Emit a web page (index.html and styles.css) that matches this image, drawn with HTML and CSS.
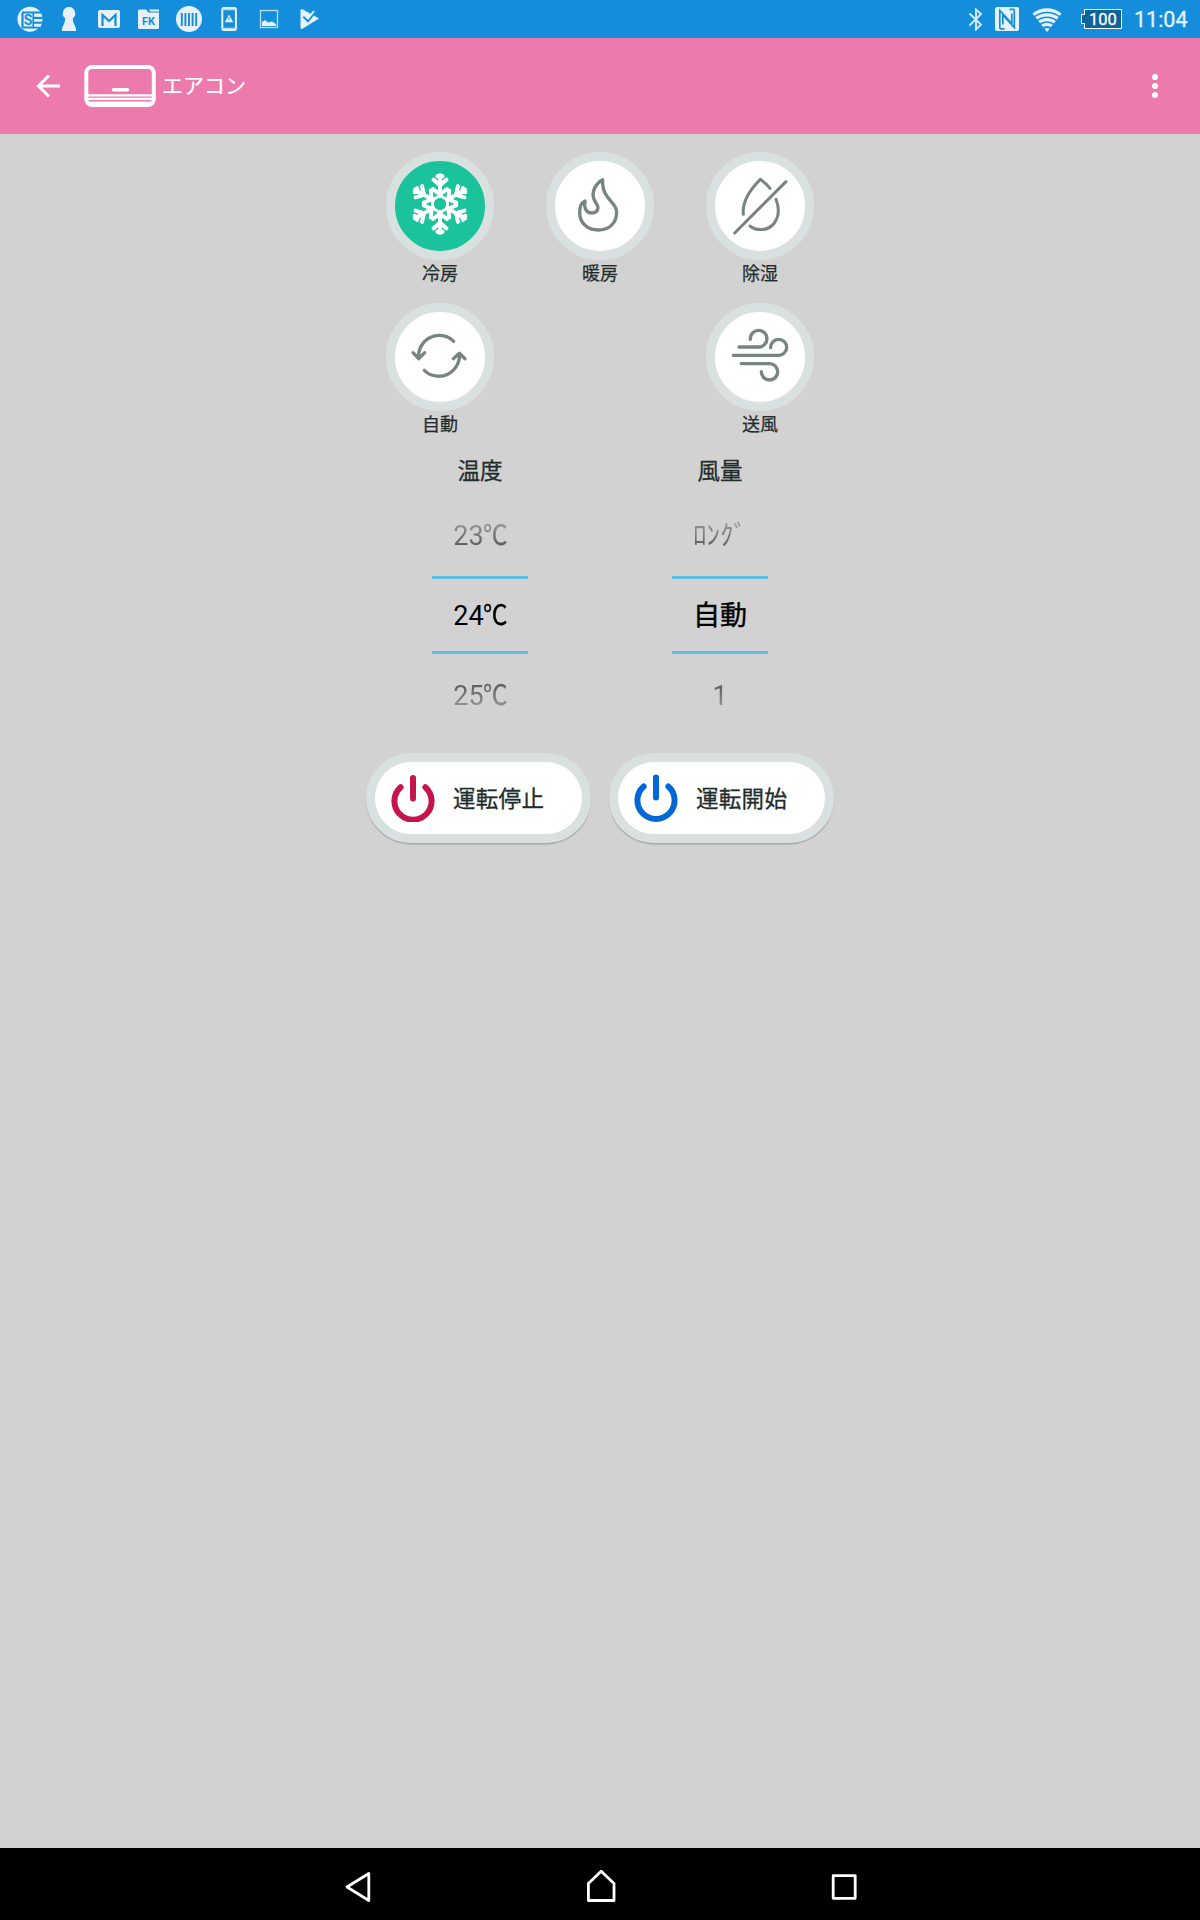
FILE: index.html
```html
<!DOCTYPE html>
<html lang="ja">
<head>
<meta charset="utf-8">
<title>エアコン</title>
<link rel="stylesheet" href="styles.css">
</head>
<body>
<div class="screen">
  <div class="status">
    <div class="notifications">
      <svg viewBox="9 0 40 38"><circle cx="30" cy="19.2" r="12.5"/><g class="cut"><path d="M22 12.5H43M33 17.8H43M33 22.6H43M22 27.5H40"/><path d="M22.5 13V27.5M33.5 13V27.5"/></g><path class="bar" d="M34 15.2H41.5M34 20.2H42M34 25.2H41"/><text class="badge-s" x="28" y="25.2">S</text></svg>
      <svg viewBox="49 0 40 38"><path d="M69 7a6.5 6.5 0 0 1 3.7 11.6L73.3 22 76 28.5V31H62V28.5L64.7 22 65.3 18.600A6.500 6.500 0 0 1 69 7Z"/></svg>
      <svg viewBox="89 0 40 38"><rect x="98" y="10" width="22" height="18" rx="2"/><path class="cut" d="M102.500 26V15L109 21 115.500 15V26"/></svg>
      <svg viewBox="129 0 40 38"><path d="M139.500 9.500H146L148.500 12.500H159V27.500Q159 29 157.500 29H139.500Q138 29 138 27.500V11Q138 9.500 139.500 9.500ZM149 9.500H159V11.500H150.500Z"/><text class="badge-fk" x="148.500" y="25">FK</text></svg>
      <svg viewBox="169 0 40 38"><circle cx="189" cy="19" r="13"/><path class="code" d="M181.800 13V26M185.400 13V26M189 13V26M192.600 13V26M196.200 13V26"/></svg>
      <svg viewBox="209 0 40 38"><rect class="line" x="222.300" y="8" width="13.600" height="22" rx="1.500"/><path class="thin" d="M222 9.500H236M222 28.500H236"/><path d="M229 14.500 233.200 22.200H224.800Z"/><path class="mark" d="M229 17V20"/></svg>
      <svg viewBox="249 0 40 38"><rect class="thin" x="260.500" y="10.500" width="17" height="17"/><path d="M262 26V22L265 20 268 22.500 272 21.500 276 24V26Z"/></svg>
      <svg viewBox="289 0 40 38"><path d="M302 9 319 18.500 302 29Q300.500 29 300.500 27.500V10.500Q300.500 9 302 9Z"/><path class="cut" d="M303.500 16.500 308 21 315.500 11.500"/><path class="tick" d="M304.500 15 308 18.500 314 11"/></svg>
    </div>
    <div class="system">
      <svg class="bluetooth" viewBox="968 8 15 23"><path class="bt" d="M969.500 13.500 981 24.500 976 29.500V9.500L981 14 969.500 25.500"/></svg>
      <svg class="nfc" viewBox="995 7 24 24"><rect x="995" y="7" width="24" height="24" rx="2"/><path class="nfc-cut" d="M1004.500 28.800H1000.500Q999.800 28.500 999.800 27V10.500L1011.800 23.500V13.500M1009.500 9.300H1013.500Q1014.300 9.500 1014.300 11V27.500L1002.800 15V24.500"/></svg>
      <svg class="wifi" viewBox="1032 8 30 25"><path d="M1047 32 1032.500 13.500C1041 6.600 1053 6.600 1061.500 13.500Z"/><path class="waves" d="M1033 17.500Q1047 7.500 1061 17.500M1036 21.500Q1047 13 1058 21.500M1039 25Q1047 19 1055 25M1042 29Q1047 25 1052 29"/></svg>
      <svg class="battery" viewBox="1081 9 41 20"><path class="cell" d="M1084.500 9.500H1121.500V28.500H1084.500V23.500H1081.500V14.500H1084.500Z"/><text class="level" x="1103" y="25">100</text></svg>
      <span class="clock">11:04</span>
    </div>
  </div>

  <div class="appbar">
    <svg class="back" viewBox="0 0 24 24"><path d="M24 12H2.500M13 1.500 2.500 12 13 22.500"/></svg>
    <svg class="aircon" viewBox="84 65 72 42"><rect class="case" x="86.300" y="67" width="67.500" height="38" rx="6"/><path class="slot" d="M113.500 89.700H127.500"/><path class="vent" d="M86 95.300H154"/><path class="vent" d="M87 98.800H153M88 102.500H152" /></svg>
    <h1>エアコン</h1>
    <svg class="more" viewBox="0 0 6 24"><circle cx="3" cy="3" r="3"/><circle cx="3" cy="12" r="3"/><circle cx="3" cy="21" r="3"/></svg>
  </div>

  <main>
    <div class="modes">
      <div class="mode selected">
        <span class="disc"><svg class="snow" viewBox="-54 -52 108 108"><defs><g id="arm"><path d="M0-8V-29M-6.500-24.500 0-18.500 6.500-24.500M-7-14.800 0-9.500 7-14.800M-2.500-27.800 0-26 2.500-27.800"/></g></defs><path class="hex" d="M0-8.500 7.400-4.250V4.250L0 8.500-7.400 4.250V-4.250Z"/><use href="#arm"/><use href="#arm" transform="rotate(60)"/><use href="#arm" transform="rotate(120)"/><use href="#arm" transform="rotate(180)"/><use href="#arm" transform="rotate(240)"/><use href="#arm" transform="rotate(300)"/></svg></span>
        <span>冷房</span>
      </div>
      <div class="mode">
        <span class="disc"><svg viewBox="0 0 324 324"><path d="M170 83C150 93 138 117 142 136C144 150 157 157 156 167C155 178 147 183 137 183C122 183 113 170 117 147C102 152 101 168 101 183C101 213 125 234 157 234C190 234 212 213 212 180C212 148 166 142 170 83Z"/></svg></span>
        <span>暖房</span>
      </div>
      <div class="mode">
        <span class="disc"><svg class="dry" viewBox="0 0 324 324"><path d="M112 187C108 150 135 110 163 82C173 89 184 98 192 109M210 142C222 173 218 195 205 213C188 237 152 238 132 222M86 243 240 89"/></svg></span>
        <span>除湿</span>
      </div>
      <div class="mode">
        <span class="disc"><svg viewBox="0 0 324 324"><path d="M203 115A62 62 0 0 0 98 166M81 149 98 167 116 149M115 202A62 62 0 0 0 220 151M202 167 220 151 237 167"/></svg></span>
        <span>自動</span>
      </div>
      <div class="mode fan">
        <span class="disc"><svg viewBox="0 0 324 324"><path d="M99 132H157A25 25 0 1 0 133 109M82 157H217A24 24 0 1 0 194 134M106 182H191A24.500 24.500 0 1 1 166 206"/></svg></span>
        <span>送風</span>
      </div>
    </div>

    <div class="pickers">
      <div class="picker">
        <h2>温度</h2>
        <div class="wheel"><span class="prev">23<i>℃</i></span><span class="current">24<i>℃</i></span><span class="next">25<i>℃</i></span></div>
      </div>
      <div class="picker">
        <h2>風量</h2>
        <div class="wheel"><span class="prev">ﾛﾝｸﾞ</span><span class="current word">自動</span><span class="next">1</span></div>
      </div>
    </div>

    <div class="power">
      <button class="stop"><svg viewBox="0 0 44 48"><path d="M9.600 13.200A18.600 18.600 0 1 0 34.400 13.200M22 4V24.500"/></svg><span>運転停止</span></button>
      <button class="start"><svg viewBox="0 0 44 48"><path d="M9.600 12.500A18.600 18.600 0 1 0 34.400 12.500M22 3.500V23.500"/></svg><span>運転開始</span></button>
    </div>
  </main>

  <nav>
    <svg viewBox="344 1868 30 40"><path d="M368.800 1877.500V1904.500L347 1891Z"/></svg>
    <svg viewBox="587 1868 30 40"><path d="M588.400 1904.500V1887.500L601.200 1875.200 614 1887.500V1904.500Z"/></svg>
    <svg viewBox="829 1868 30 40"><path d="M833.200 1879.700H855.200V1902.300H833.200Z"/></svg>
  </nav>
</div>
</body>
</html>
```
FILE: styles.css
```css
* { box-sizing: border-box; }
body { margin: 0; font-family: Roboto, "Noto Sans CJK JP", sans-serif; }
svg { display: block; flex: none; }
h1, h2 { margin: 0; font-weight: 400; }
.screen { width: 1200px; height: 1920px; display: flex; flex-direction: column; background: #d2d2d2; }

.status { height: 38px; background: #148eda; display: flex; justify-content: space-between; padding: 0 11px 0 9px; }
.status svg { fill: #e5f2fb; }
.notifications { display: flex; }
.notifications svg { width: 40px; height: 38px; }
.status .cut { fill: none; stroke: #148eda; stroke-width: 2.2; }
.status .bar { fill: none; stroke: #e5f2fb; stroke-width: 2.4; }
.status .line { fill: none; stroke: #e5f2fb; stroke-width: 2; }
.status .thin { fill: none; stroke: #b9dcf4; stroke-width: 1.3; }
.status .code { stroke: #148eda; stroke-width: 1.9; }
.status .mark { stroke: #148eda; stroke-width: 1; }
.status .tick { fill: none; stroke: #e5f2fb; stroke-width: 2; }
.badge-s { font-size: 14px; font-weight: 700; fill: #148eda; text-anchor: middle; }
.badge-fk { font-size: 11px; font-weight: 700; fill: #148eda; text-anchor: middle; }
.system { display: flex; align-items: center; }
.bluetooth { width: 15px; height: 23px; margin-right: 12px; }
.nfc { width: 24px; height: 24px; margin-right: 13px; }
.wifi { width: 30px; height: 25px; margin: 3px 19px 0 0; }
.battery { width: 41px; height: 20px; margin-right: 12px; }
.status .bt { fill: none; stroke: #d5ebf9; stroke-width: 1.9; }
.status .nfc-cut { fill: none; stroke: #148eda; stroke-width: 1.7; }
.status .waves { fill: none; stroke: #148eda; stroke-width: 1.7; }
.status .cell { fill: #0e639a; stroke: #fff; stroke-width: 1; }
.level { font-size: 16.500px; fill: #fff; stroke: #fff; stroke-width: .3px; text-anchor: middle; }
.clock { color: #e5f2fb; font-size: 21.500px; line-height: 38px; width: 55px; white-space: nowrap; padding-top: 1px; -webkit-text-stroke: .3px #e5f2fb; }

.appbar { height: 96px; background: #ed7aac; display: flex; align-items: center; padding: 0 42px 0 36px; }
.appbar svg { fill: #fff; }
.back { width: 24px; height: 24px; margin-right: 24px; }
.back path { fill: none; stroke: #fff; stroke-width: 3; }
.aircon { width: 72px; height: 42px; margin-right: 6px; }
.aircon .case { fill: none; stroke: #fff; stroke-width: 4; }
.aircon .slot { stroke: #fff; stroke-width: 3.400; stroke-linecap: round; }
.aircon .vent { stroke: #fff; stroke-width: 2.200; }
.appbar h1 { color: #fff; font-size: 21px; line-height: 30px; -webkit-text-stroke: .2px #fff; }
.more { width: 6px; height: 24px; margin-left: auto; }

main { flex: 1; display: flex; flex-direction: column; align-items: center; padding-top: 18px; color: #1f2d2d; }
.modes { display: grid; grid-template-columns: repeat(3, 160px); grid-auto-rows: 151px; }
.mode { display: flex; flex-direction: column; align-items: center; font-size: 18px; line-height: 28px; -webkit-text-stroke: .25px #1f2d2d; }
.fan { grid-column: 3; }
.disc { width: 108px; height: 108px; border-radius: 50%; background: #fff; border: 9px solid #d9e1e0; }
.disc svg { width: 108px; height: 108px; margin: -9px; fill: none; stroke: #768482; stroke-width: 10; stroke-linecap: round; stroke-linejoin: round; }
.disc .dry { stroke-width: 9; }
.selected .disc { background: #1ac39b; }
.disc .snow { stroke: #fff; stroke-width: 4; }
.snow .hex { stroke-width: 3; }

.pickers { display: flex; gap: 144px; }
.picker { width: 96px; text-align: center; }
.picker h2 { font-size: 22.500px; line-height: 34px; -webkit-text-stroke: .3px #1f2d2d; }
.wheel { display: flex; flex-direction: column; align-items: stretch; margin-top: 6px; font-size: 27px; color: #000; }
.wheel span { height: 82px; line-height: 84px; }
.wheel i { display: inline-block; width: 24px; font-style: normal; font-family: "Noto Sans CJK JP", sans-serif; line-height: 1; transform: scaleX(.91); transform-origin: left; margin-left: -1px; -webkit-text-stroke: .3px #000; }
.wheel .current { height: 78px; line-height: 74px; border: solid #62bce1; border-width: 3px 0; }
.wheel .word { -webkit-text-stroke: .4px #000; }
.wheel .prev { -webkit-mask-image: linear-gradient(rgba(0, 0, 0, .28) 35%, rgba(0, 0, 0, .58) 66%); mask-image: linear-gradient(rgba(0, 0, 0, .28) 35%, rgba(0, 0, 0, .58) 66%); }
.wheel .next { -webkit-mask-image: linear-gradient(rgba(0, 0, 0, .58) 35%, rgba(0, 0, 0, .28) 66%); mask-image: linear-gradient(rgba(0, 0, 0, .58) 35%, rgba(0, 0, 0, .28) 66%); }

.power { display: flex; gap: 18px; margin-top: 17px; }
.power button { display: flex; align-items: center; width: 225px; height: 90px; padding: 0 0 0 16px; border: 9px solid #d9e1e0; border-radius: 45px; background: #fff; color: #1f2d2d; font: 400 22.500px "Noto Sans CJK JP", sans-serif; box-shadow: 0 1.500px 1px rgba(0, 0, 0, .2); }
.power svg { width: 44px; height: 48px; margin-right: 18px; fill: none; stroke: #c4164b; stroke-width: 6; stroke-linecap: round; }
.power span { padding-bottom: 2px; letter-spacing: .3px; -webkit-text-stroke: .3px #1f2d2d; }
.power .start svg { stroke: #0068d6; }

nav { height: 72px; background: #000; display: flex; justify-content: space-between; align-items: center; padding: 0 341px 0 344px; }
nav svg { width: 30px; height: 40px; fill: none; stroke: #fff; stroke-width: 2.800; stroke-linejoin: round; }
```
